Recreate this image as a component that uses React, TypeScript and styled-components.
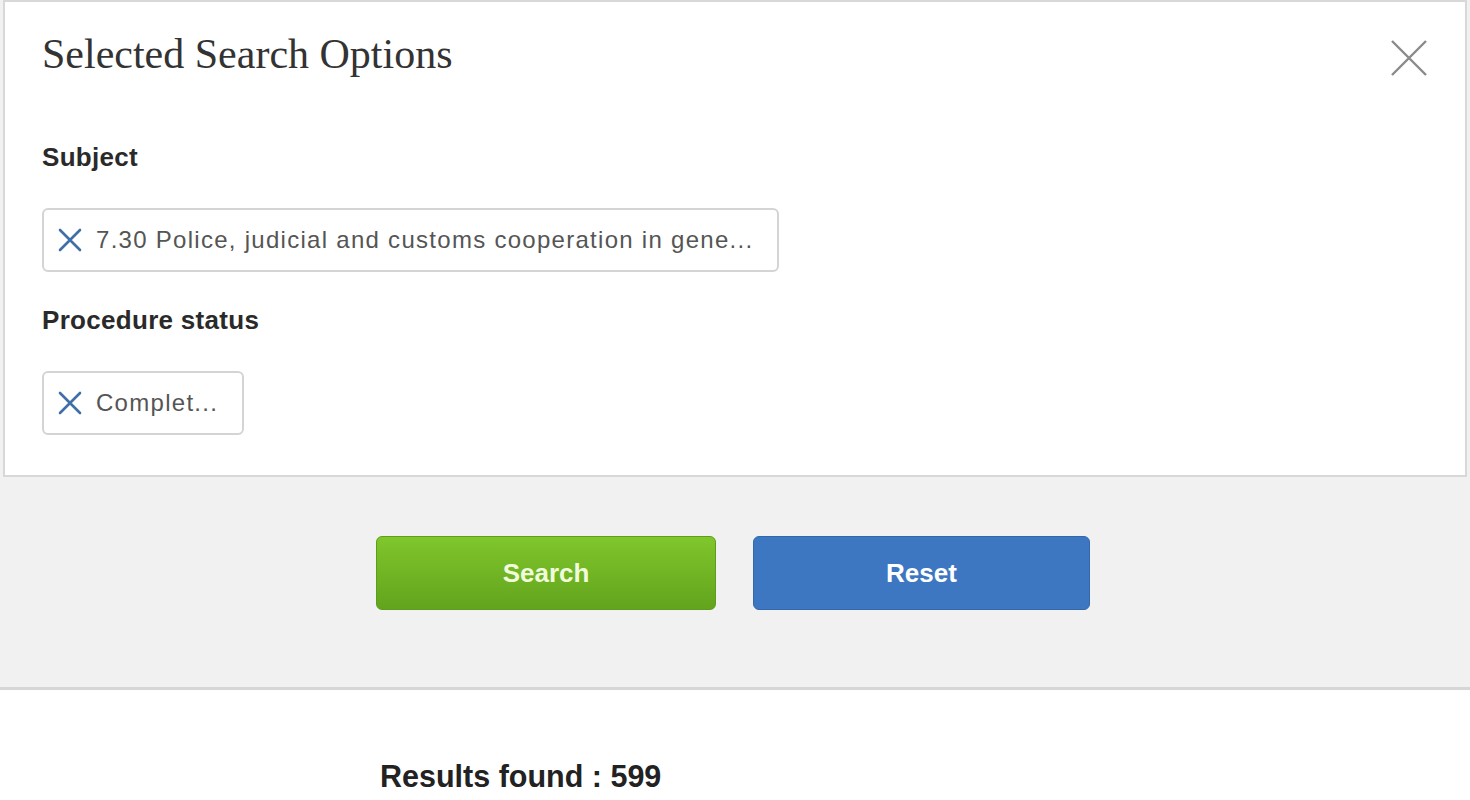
import React from 'react';
import styled, { createGlobalStyle } from 'styled-components';

const GlobalStyle = createGlobalStyle`
  html, body {
    margin: 0;
    padding: 0;
    background: #ffffff;
    font-family: "Liberation Sans", Arial, sans-serif;
  }
`;

const Page = styled.div`
  width: 1470px;
  display: flex;
  flex-direction: column;
`;

const Top = styled.div`
  background: #f1f1f1;
  border-bottom: 3px solid #d6d6d6;
  display: flex;
  flex-direction: column;
  align-items: stretch;
`;

const Panel = styled.section`
  position: relative;
  margin: 0 3px;
  height: 477px;
  box-sizing: border-box;
  background: #ffffff;
  border: 2px solid #d8d8d8;
  padding: 31px 37px 0;
  display: flex;
  flex-direction: column;
  align-items: flex-start;
`;

const Title = styled.h2`
  margin: 0;
  font-family: "Liberation Serif", "Times New Roman", serif;
  font-weight: normal;
  font-size: 42px;
  line-height: 42px;
  color: #333333;
`;

const CloseButton = styled.button`
  position: absolute;
  top: 36px;
  right: 36px;
  width: 40px;
  height: 40px;
  padding: 0;
  border: none;
  background: transparent;
  display: flex;
  align-items: center;
  justify-content: center;
`;

const Label = styled.div<{ $top: number }>`
  margin-top: ${(p) => p.$top}px;
  font-size: 26px;
  line-height: 30px;
  font-weight: bold;
  letter-spacing: 0.3px;
  color: #2a2a2a;
`;

const Chip = styled.div`
  margin-top: 36px;
  height: 64px;
  box-sizing: border-box;
  border: 2px solid #d4d4d4;
  border-radius: 6px;
  background: #ffffff;
  padding: 0 24px 0 14px;
  display: flex;
  align-items: center;
  gap: 14px;
  font-size: 24px;
  letter-spacing: 1.28px;
  color: #555555;
  white-space: nowrap;
`;

const ButtonRow = styled.div`
  display: flex;
  justify-content: center;
  gap: 37px;
  padding: 59px 4px 77px 0;
`;

const ActionButton = styled.button<{ $variant: 'green' | 'blue'; $width: number }>`
  width: ${(p) => p.$width}px;
  height: 74px;
  border-radius: 6px;
  border: 1px solid ${(p) => (p.$variant === 'green' ? '#5d9c1c' : '#3468ad')};
  background: ${(p) =>
    p.$variant === 'green'
      ? 'linear-gradient(to bottom, #80c62c, #62a41d)'
      : '#3d77c1'};
  color: ${(p) => (p.$variant === 'green' ? '#f0fbdc' : '#ffffff')};
  font-family: "Liberation Sans", Arial, sans-serif;
  font-size: 26px;
  font-weight: bold;
`;

const Results = styled.div`
  padding: 69px 0 0 380px;
  font-size: 30.5px;
  line-height: 34px;
  font-weight: bold;
  color: #222222;
`;

const RemoveIcon = () => (
  <svg width="24" height="24" viewBox="0 0 24 24">
    <path d="M2 2 L22 22 M22 2 L2 22" stroke="#3f6fa6" strokeWidth="2.6" strokeLinecap="round" />
  </svg>
);

const CloseIcon = () => (
  <svg width="38" height="38" viewBox="0 0 38 38">
    <path d="M2 2 L36 36 M36 2 L2 36" stroke="#8a8a8a" strokeWidth="2.4" />
  </svg>
);

interface Filter {
  label: string;
  values: string[];
}

const filters: Filter[] = [
  { label: 'Subject', values: ['7.30 Police, judicial and customs cooperation in gene...'] },
  { label: 'Procedure status', values: ['Complet...'] },
];

export default function App() {
  return (
    <Page>
      <GlobalStyle />
      <Top>
        <Panel>
          <Title>Selected Search Options</Title>
          <CloseButton aria-label="Close">
            <CloseIcon />
          </CloseButton>
          {filters.map((f, i) => (
            <React.Fragment key={f.label}>
              <Label $top={i === 0 ? 67 : 33}>{f.label}</Label>
              {f.values.map((v) => (
                <Chip key={v}>
                  <RemoveIcon />
                  {v}
                </Chip>
              ))}
            </React.Fragment>
          ))}
        </Panel>
        <ButtonRow>
          <ActionButton $variant="green" $width={340}>Search</ActionButton>
          <ActionButton $variant="blue" $width={337}>Reset</ActionButton>
        </ButtonRow>
      </Top>
      <Results>Results found : 599</Results>
    </Page>
  );
}
